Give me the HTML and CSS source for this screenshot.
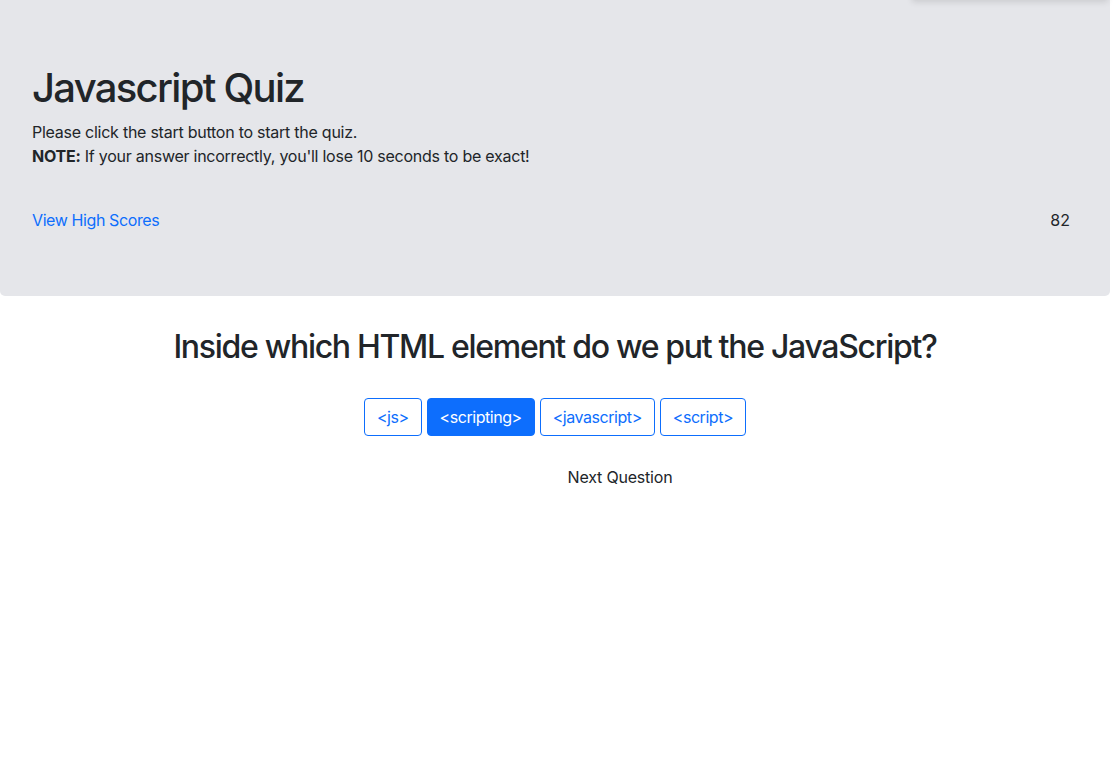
FILE: index.html
```html
<!DOCTYPE html>
<html lang="en">
<head>
<meta charset="utf-8">
<title>Javascript Quiz</title>
<link rel="stylesheet" href="styles.css">
</head>
<body>
<div class="page">
  <div class="top-shadow"></div>
  <header class="jumbotron">
    <h1 class="title">Javascript Quiz</h1>
    <p class="lead">Please click the start button to start the quiz.<br><strong>NOTE:</strong> If your answer incorrectly, you'll lose 10 seconds to be exact!</p>
    <div class="meta">
      <a href="#" class="scores-link">View High Scores</a>
      <span class="timer">82</span>
    </div>
  </header>
  <main class="quiz">
    <h2 class="question">Inside which HTML element do we put the JavaScript?</h2>
    <div class="answers">
      <button class="btn btn-outline">&lt;js&gt;</button>
      <button class="btn btn-primary">&lt;scripting&gt;</button>
      <button class="btn btn-outline">&lt;javascript&gt;</button>
      <button class="btn btn-outline">&lt;script&gt;</button>
    </div>
    <div class="next-row">
      <button class="next-btn">Next Question</button>
    </div>
  </main>
</div>
</body>
</html>
```
FILE: styles.css
```css
* { box-sizing: border-box; }
html, body { margin: 0; padding: 0; background: #fff; }
body {
  font-family: Inter, "Noto Sans", "Liberation Sans", sans-serif;
  font-size: 16px;
  line-height: 1.5;
  color: #212529;
}
.page {
  width: 1110px;
  position: relative;
}
.top-shadow {
  position: absolute;
  top: -20px;
  left: 912px;
  width: 196px;
  height: 20px;
  box-shadow: 0 2px 6px rgba(0,0,0,0.12);
}
.jumbotron {
  background: #e5e6ea;
  border-radius: 0 0 5px 5px;
  padding: 64px 32px;
  margin-bottom: 32px;
}
.title {
  margin: 0 0 8px;
  font-size: 40px;
  font-weight: 500;
  line-height: 1.2;
  letter-spacing: -1.7px;
}
.lead {
  margin: 0 0 16px;
  letter-spacing: -0.25px;
}
.lead strong { font-weight: 700; }
.meta {
  display: flex;
  justify-content: space-between;
  align-items: center;
  margin-top: 40px;
  padding-right: 8px;
}
.scores-link {
  color: #0d6efd;
  text-decoration: none;
  letter-spacing: -0.4px;
}
.quiz { text-align: center; }
.question {
  margin: 0 0 32px;
  font-size: 32px;
  font-weight: 500;
  line-height: 1.2;
  letter-spacing: -1.3px;
}
.answers {
  display: flex;
  justify-content: center;
  gap: 5px;
}
.btn {
  font-family: inherit;
  font-size: 16px;
  line-height: 24px;
  padding: 6px 12px;
  border-radius: 4px;
  border: 1px solid #0d6efd;
  cursor: pointer;
  letter-spacing: -0.45px;
}
.btn-outline { background: #fff; color: #0d6efd; }
.btn-primary { background: #0d6efd; color: #fff; }
.next-row {
  margin-top: 22px;
  padding-left: 130px;
}
.next-btn {
  font-family: inherit;
  font-size: 16px;
  line-height: 24px;
  padding: 6px 12px;
  background: transparent;
  border: 1px solid transparent;
  color: #212529;
  letter-spacing: -0.2px;
}
```
